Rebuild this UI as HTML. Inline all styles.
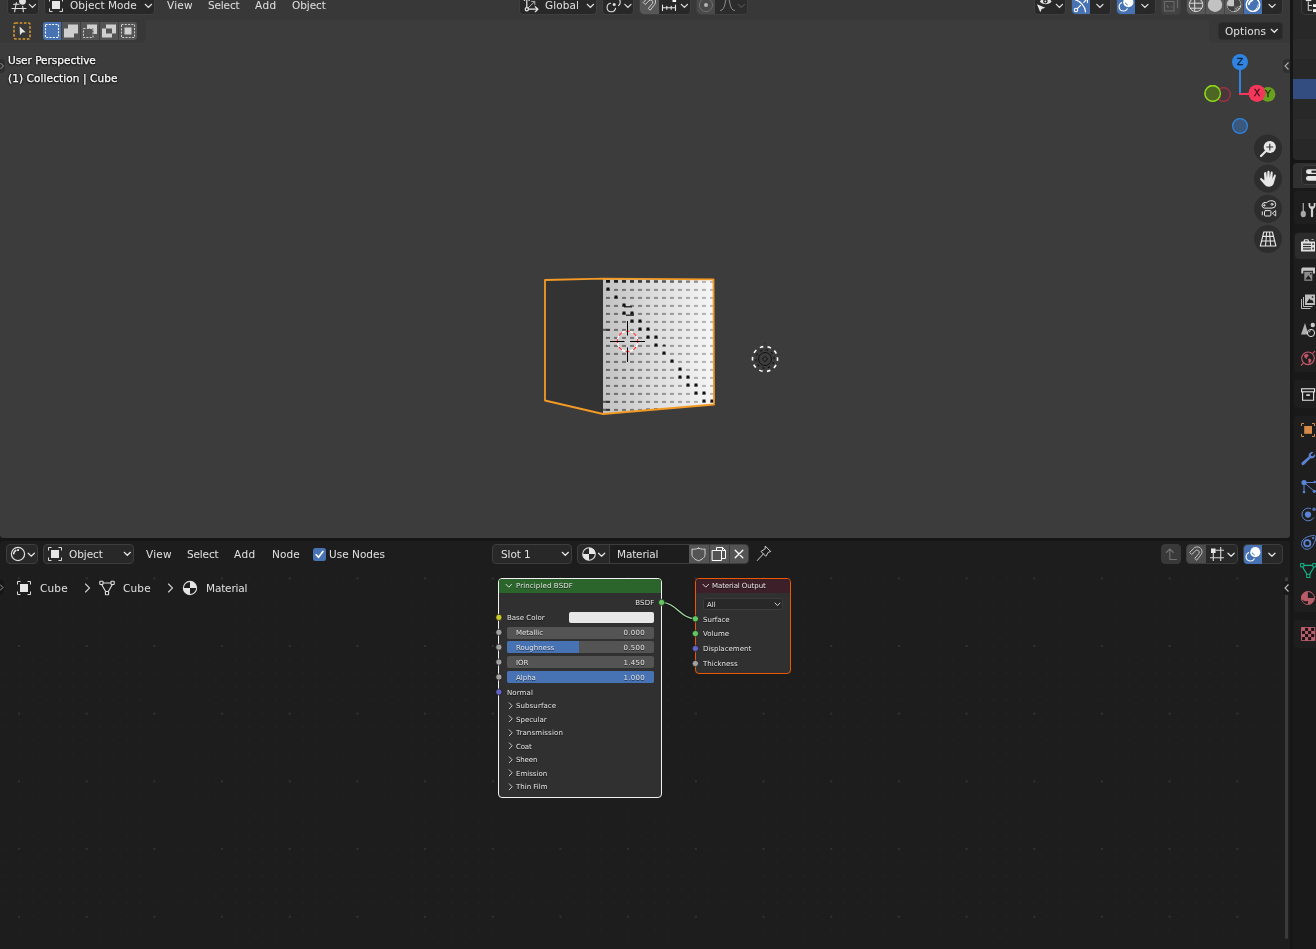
<!DOCTYPE html>
<html lang="en">
<head>
<meta charset="utf-8">
<title>Blender</title>
<style>
*{box-sizing:border-box;margin:0;padding:0}
html,body{width:1316px;height:949px;overflow:hidden;background:#161616}
body{position:relative;font-family:"DejaVu Sans","Liberation Sans",sans-serif;font-size:10.500px;color:#e0e0e0;line-height:14px}
.abs{position:absolute}
.t{position:absolute;white-space:nowrap;line-height:14px;height:14px;will-change:transform}
svg{position:absolute;overflow:visible}
/* regions */
#vp{left:0;top:0;width:1290px;height:538px;background:#3c3c3c;border-radius:0 0 3.500px 3.500px;overflow:hidden}
#ne{left:0;top:541px;width:1290px;height:408px;background:#1d1d1d;border-radius:3.500px 3.500px 0 0;overflow:hidden}
#ol{left:1293px;top:0;width:23px;height:160px;background:#282828;border-radius:0 0 0 4px;overflow:hidden}
#pr{left:1293px;top:163px;width:23px;height:786px;background:#191919;border-radius:4px 0 0 0;overflow:hidden}
/* buttons */
.btn{position:absolute;background:#282828;border:1px solid #3a3a3a;border-radius:4px}
.hb{position:absolute;top:-6px;height:20px;background:#282828;border-radius:3.500px;box-shadow:0 0 0 1px #3f3f3f}
.nb{position:absolute;top:3px;height:20px;background:#282828;border:1px solid #3d3d3d;border-radius:4px}
.ov{color:#ffffff;-webkit-text-stroke:0.250px #fff;text-shadow:0 0 2px #000,0 1px 2px rgba(0,0,0,.9),0 0 1px #000}
.n{position:absolute;white-space:nowrap;font-size:7px;line-height:10px;height:10px;color:#e6e6e6;will-change:transform;text-shadow:0 0.500px 0.500px rgba(0,0,0,.6)}
.gz{font-size:9.500px;-webkit-text-stroke:0.300px currentColor}
</style>
</head>
<body>

<!-- ================= 3D VIEWPORT ================= -->
<div id="vp" class="abs">
  <!-- header strip -->
  <div class="abs" id="vph" style="left:0;top:0;width:1290px;height:19.500px;background:#383838"></div>
  <!-- tool settings strips -->
  <div class="abs" style="left:0;top:19px;width:146px;height:24px;background:#383838;border-radius:0 0 5px 0"></div>
  <div class="abs" style="left:1209px;top:19px;width:81px;height:24px;background:#383838;border-radius:0 0 0 5px"></div>

  <!-- editor type -->
  <div class="hb" style="left:8px;width:30px"></div>
  <svg style="left:8px;top:-6px" width="30" height="20" viewBox="8 -6 30 20" fill="none" stroke="#e0e0e0" stroke-width="1.1" stroke-linecap="round">
    <path d="M13.5 4.3H19 M12 8.5H26 M16.4 2.5L14.6 11.8 M22.6 6.2L23.4 11.8"/>
    <circle cx="22.5" cy="1.3" r="3.4" fill="#e0e0e0" stroke="none"/>
    <path d="M29.3 4.4L32.4 7.4L35.5 4.4" stroke-width="1.2"/>
  </svg>
  <!-- object mode -->
  <div class="hb" style="left:45px;width:109px"></div>
  <svg style="left:48px;top:-3px" width="16" height="16" viewBox="0 0 16 16" fill="none" stroke="#e0e0e0" stroke-width="1">
    <rect x="4" y="4" width="8" height="8" fill="#e6e6e6" stroke="none"/>
    <path d="M1.5 4.5V1.5H4.5 M11.5 1.5H14.5V4.5 M14.5 11.5V14.5H11.5 M4.5 14.5H1.5V11.5"/>
  </svg>
  <div class="t" style="left:70px;top:-2px;letter-spacing:0.060px">Object Mode</div>
  <svg style="left:144px;top:3px" width="9" height="6" viewBox="0 0 9 6" fill="none" stroke="#e0e0e0" stroke-width="1.2" stroke-linecap="round"><path d="M1.2 1.3L4.4 4.4L7.6 1.3"/></svg>
  <!-- menus -->
  <div class="t" style="left:167px;top:-2px;letter-spacing:0.220px">View</div>
  <div class="t" style="left:208px;top:-2px;letter-spacing:-0.150px">Select</div>
  <div class="t" style="left:255px;top:-2px;letter-spacing:0.390px">Add</div>
  <div class="t" style="left:292px;top:-2px;letter-spacing:-0.070px">Object</div>
  <!-- global orientation -->
  <div class="hb" style="left:520px;width:76px"></div>
  <svg style="left:520px;top:-6px" width="24" height="20" viewBox="520 -6 24 20" fill="none" stroke="#e6e6e6" stroke-width="1.200" stroke-linecap="round" stroke-linejoin="round">
    <path d="M526.800 -3V7.600 M528.400 9.200H537.600 M535.300 6.700L537.900 9.200L535.300 11.700 M524.400 0.400L526.800 -2.200L529.200 0.400"/>
    <path d="M528 8L534.600 1.600 M531.500 1.400H534.800V4.700" stroke="#bdbdbd" stroke-width=".9"/>
    <circle cx="526.800" cy="9.200" r="1.600" fill="#282828"/>
  </svg>
  <div class="t" style="left:545px;top:-2px;letter-spacing:0.080px">Global</div>
  <svg style="left:586px;top:3px" width="9" height="6" viewBox="0 0 9 6" fill="none" stroke="#e0e0e0" stroke-width="1.2" stroke-linecap="round"><path d="M1.2 1.3L4.4 4.4L7.6 1.3"/></svg>
  <!-- pivot -->
  <div class="hb" style="left:603px;width:30px"></div>
  <svg style="left:603px;top:-6px" width="30" height="20" viewBox="603 -6 30 20" fill="none" stroke="#e0e0e0" stroke-width="1.1" stroke-linecap="round">
    <path d="M615.6 8.2A4.3 4.3 0 1 1 610.6 3.2"/>
    <path d="M612.5 -1.5A4.6 4.6 0 1 1 618.6 5.6"/>
    <circle cx="614.2" cy="4.4" r="1.5" fill="#e0e0e0" stroke="none"/>
    <path d="M624.8 4.4L627.9 7.4L631 4.4" stroke-width="1.2"/>
  </svg>
  <!-- snap -->
  <div class="hb" style="left:640px;width:50px"></div>
  <div class="abs" style="left:640px;top:-6px;width:19px;height:20px;background:#575757;border-radius:4px 0 0 4px"></div>
  <svg style="left:640px;top:-6px" width="50" height="20" viewBox="640 -6 50 20" fill="none" stroke="#d0d0d0" stroke-width="1" stroke-linecap="round" stroke-linejoin="round">
    <path d="M643.5 2.2L646.8 -1.2A4.6 4.6 0 0 1 654.6 4.6L650.2 10.2L648.3 8.4L652.4 3.6A2.1 2.1 0 0 0 648.8 1L645.5 4.2Z"/>
    <path d="M662.5 5V10.5 M675.5 5V10.5 M666.8 6.2V9.3 M671.2 6.2V9.3 M662.5 7.8H675.5" stroke="#e6e6e6" stroke-width="1.1"/>
    <rect x="672.5" y="-1" width="3.6" height="3" fill="#ffffff" stroke="none"/>
    <path d="M681.3 4.4L684.4 7.4L687.5 4.4" stroke="#e6e6e6" stroke-width="1.2"/>
  </svg>
  <!-- proportional -->
  <div class="hb" style="left:697px;width:50px;background:#2c2c2c"></div>
  <div class="abs" style="left:697px;top:-6px;width:18px;height:20px;background:#4a4a4a;border-radius:4px 0 0 4px"></div>
  <svg style="left:697px;top:-6px" width="50" height="20" viewBox="697 -6 50 20" fill="none" stroke="#8a8a8a" stroke-width="1" stroke-linecap="round">
    <circle cx="706" cy="5" r="6.6" stroke="#6e6e6e"/>
    <circle cx="706" cy="5" r="2" fill="#b4b4b4" stroke="none"/>
    <path d="M720.5 10.5C726 10.500 724.500 -2 727.500 -2C730.500 -2 729 10.500 734.500 10.500" stroke="#8f8f8f"/>
    <path d="M738.3 4.4L741.4 7.4L744.5 4.4" stroke="#4e4e4e" stroke-width="1.2"/>
  </svg>

  <!-- tool settings: select box + modes -->
  <svg style="left:13px;top:22px" width="18" height="18" viewBox="0 0 18 18" fill="none">
    <rect x="1" y="1" width="16" height="16" rx="1.5" stroke="#d9962b" stroke-width="1.6" stroke-dasharray="2.6 1.6"/>
    <path d="M6.6 4.6L12.6 10.2L9.2 10.4L7 13.2Z" fill="#e6e6e6"/>
  </svg>
  <div class="abs" style="left:43px;top:22px;width:94px;height:18px;background:#545454;border-radius:3px"></div>
  <div class="abs" style="left:43px;top:22px;width:18px;height:18px;background:#4772b3;border-radius:3px 0 0 3px"></div>
  <div class="abs" style="left:61px;top:22px;width:1px;height:18px;background:#3f3f3f"></div>
  <div class="abs" style="left:80px;top:22px;width:1px;height:18px;background:#3f3f3f"></div>
  <div class="abs" style="left:99px;top:22px;width:1px;height:18px;background:#3f3f3f"></div>
  <div class="abs" style="left:118px;top:22px;width:1px;height:18px;background:#3f3f3f"></div>
  <svg style="left:43px;top:22px" width="94" height="18" viewBox="43 22 94 18" fill="none" stroke="#ffffff" stroke-width="1">
    <rect x="45.500" y="24.500" width="13" height="13" stroke-dasharray="2 1.3" stroke-width="1.1"/>
    <path d="M68 24.500H78V33.500H74V37.500H64V28.500H68Z" fill="#cfcfcf" stroke="none"/>
    <path d="M87 24.500H97V34H93.500V28.500H87Z" fill="#cfcfcf" stroke="none"/>
    <rect x="83.500" y="28.500" width="9.500" height="9" stroke="#cfcfcf" stroke-dasharray="2 1.3"/>
    <path d="M106 24.500H116V33.500H112V28.500H106Z M102 28.500H106V33.500H112V37.500H102Z" fill="#cfcfcf" stroke="none"/>
    <rect x="121.500" y="24.500" width="13" height="13" stroke="#cfcfcf" stroke-dasharray="2 1.3"/>
    <rect x="124.500" y="27.500" width="7" height="7" fill="#cfcfcf" stroke="none"/>
  </svg>

  <!-- cube -->
  <svg style="left:0;top:0" width="1290" height="538" viewBox="0 0 1290 538">
    <defs>
      <linearGradient id="lg" x1="603" y1="0" x2="714" y2="0" gradientUnits="userSpaceOnUse">
        <stop offset="0" stop-color="#c2c2c2"/><stop offset="0.45" stop-color="#dcdcdc"/><stop offset="1" stop-color="#f6f6f6"/>
      </linearGradient>
      <linearGradient id="dg" x1="603" y1="0" x2="714" y2="0" gradientUnits="userSpaceOnUse">
        <stop offset="0" stop-color="#000" stop-opacity="0.480"/><stop offset="1" stop-color="#000" stop-opacity="0.240"/>
      </linearGradient>
      <pattern id="dash" x="606" y="280.900" width="8" height="8" patternUnits="userSpaceOnUse">
        <rect x="0" y="0" width="4" height="2" fill="#fff"/>
      </pattern>
      <mask id="dm"><rect x="603" y="278" width="112" height="138" fill="url(#dash)"/></mask>
      <clipPath id="fc"><polygon points="603,279 713.5,279.5 714,404.5 603,414"/></clipPath>
    </defs>
    <polygon points="545,280 603,279 603,414 545,400.5" fill="#333333"/>
    <polygon points="603,279 713.5,279.5 714,404.5 603,414" fill="url(#lg)"/>
    <g clip-path="url(#fc)">
      <rect x="603" y="278" width="112" height="138" fill="url(#dg)" mask="url(#dm)"/>
      <g fill="#111"><rect x="663" y="344.500" width="2.500" height="1.800" opacity=".8"/><rect x="606.5" y="287.5" width="3" height="3"/><rect x="614.5" y="295.5" width="3" height="3"/><rect x="622.5" y="303.5" width="3" height="3"/><rect x="622.5" y="311.5" width="3" height="3"/><rect x="630.5" y="311.5" width="3" height="3"/><rect x="630.5" y="319.5" width="3" height="3"/><rect x="638.5" y="319.5" width="3" height="3"/><rect x="638.5" y="327.5" width="3" height="3"/><rect x="646.5" y="327.5" width="3" height="3"/><rect x="646.5" y="335.5" width="3" height="3"/><rect x="654.5" y="335.5" width="3" height="3"/><rect x="654.5" y="343.5" width="3" height="3"/><rect x="662.5" y="351.5" width="3" height="3"/><rect x="670.5" y="359.5" width="3" height="3"/><rect x="678.5" y="367.5" width="3" height="3"/><rect x="678.5" y="375.5" width="3" height="3"/><rect x="686.5" y="375.5" width="3" height="3"/><rect x="686.5" y="383.5" width="3" height="3"/><rect x="694.5" y="383.5" width="3" height="3"/><rect x="694.5" y="391.5" width="3" height="3"/><rect x="702.5" y="391.5" width="3" height="3"/><rect x="702.5" y="399.5" width="3" height="3"/><rect x="710.5" y="399.5" width="3" height="3"/><rect x="606.0" y="280" width="4" height="2.5" opacity="0.95"/><rect x="614.0" y="280" width="4" height="2.5" opacity="0.88"/><rect x="622.0" y="280" width="4" height="2.5" opacity="0.81"/><rect x="630.0" y="280" width="4" height="2.5" opacity="0.74"/><rect x="638.0" y="280" width="4" height="2.5" opacity="0.67"/><rect x="646.0" y="280" width="4" height="2.5" opacity="0.60"/><rect x="654.0" y="280" width="4" height="2.5" opacity="0.53"/><rect x="662.0" y="280" width="4" height="2.5" opacity="0.46"/><rect x="670.0" y="280" width="4" height="2.5" opacity="0.39"/><rect x="678.0" y="280" width="4" height="2.5" opacity="0.32"/><rect x="686.0" y="280" width="4" height="2.5" opacity="0.25"/><rect x="694.0" y="280" width="4" height="2.5" opacity="0.18"/>
        <rect x="603" y="328.800" width="7" height="2" opacity=".6"/><rect x="603" y="400.800" width="7" height="2" opacity=".6"/><rect x="603" y="408.800" width="7" height="2" opacity=".6"/>
        <rect x="624" y="306" width="8" height="1.500" opacity=".8"/><rect x="626" y="314.500" width="8" height="1.500" opacity=".8"/>
        <rect x="646" y="408.5" width="4" height="2" opacity=".6"/><rect x="654" y="408" width="4" height="2" opacity=".5"/>
      </g>
    </g>
    <polygon points="545,280 603,278.700 713.500,279.300 714,404.500 603,414 545,400.500" fill="none" stroke="#f39a26" stroke-width="1.800" stroke-linejoin="round"/>
    <!-- 3d cursor -->
    <circle cx="627.500" cy="341.300" r="10.200" fill="none" stroke="#ffffff" stroke-width="1.300"/>
    <circle cx="627.500" cy="341.300" r="10.200" fill="none" stroke="#ff3b3b" stroke-width="1.300" stroke-dasharray="4 4.010" transform="rotate(-12 627.500 341.300)"/>
    <path d="M627.500 321V335.500 M627.500 347.500V362 M610 341.500H624.500 M630 341.500H645" stroke="#000" stroke-width="1"/>
    <!-- light -->
    <g fill="none">
      <circle cx="765" cy="359" r="12.500" stroke="#ffffff" stroke-width="1.600" stroke-dasharray="3.600 4.250" transform="rotate(-8 765 359)"/>
      <circle cx="765" cy="359" r="9.200" stroke="#111" stroke-width="1" stroke-dasharray="2.500 3.280" transform="rotate(20 765 359)"/>
      <circle cx="765" cy="359" r="6.500" stroke="#111" stroke-width="1"/>
      <path d="M765 356.300L767.700 359L765 361.700L762.300 359Z" stroke="#111" stroke-width="1"/>
      <circle cx="764.800" cy="343.500" r="1.300" fill="#343434"/>
    </g>
    <!-- gizmo -->
    <circle cx="1212.700" cy="93.500" r="7.700" fill="#4d6624" stroke="#8bd61a" stroke-width="1.400"/>
    <circle cx="1223.500" cy="94.500" r="6.800" fill="#4a373b" stroke="#a83245" stroke-width="1.200"/>
    <circle cx="1212.700" cy="93.500" r="7.700" fill="#4d6624" stroke="#8bd61a" stroke-width="1.400"/>
    <circle cx="1240" cy="126" r="7.400" fill="#3a587c" stroke="#2e84e0" stroke-width="1.300"/>
    <circle cx="1268" cy="94.300" r="7.400" fill="#68a11e"/>
    <path d="M1240 62V94" stroke="#2e84e0" stroke-width="2"/>
    <path d="M1239 94H1257" stroke="#f3375a" stroke-width="2"/>
    <circle cx="1240" cy="62" r="8" fill="#2e84e0"/>
    <circle cx="1257" cy="93.300" r="8.400" fill="#f3375a"/>
    <!-- nav buttons -->
    <g fill="#2d2d2d"><circle cx="1268" cy="148.500" r="14"/><circle cx="1268" cy="178.700" r="14"/><circle cx="1268" cy="208.800" r="14"/><circle cx="1268" cy="239" r="14"/></g>
    <g fill="none" stroke="#e6e6e6" stroke-width="1.200" stroke-linecap="round" stroke-linejoin="round">
      <circle cx="1269.800" cy="147" r="6.100" fill="#e6e6e6" stroke="none"/>
      <path d="M1265.500 151.500L1261 156" stroke-width="2.200"/>
      <path d="M1266.800 147H1272.800 M1269.800 144V150" stroke="#2d2d2d" stroke-width="1.100"/>
      <!-- hand -->
      <path d="M1264.200 172.700C1264.800 171.600 1266.300 171.900 1266.400 173.100L1267 178.200L1267.400 171.600C1267.500 170.300 1269.400 170.300 1269.500 171.600L1269.800 178L1270.700 172.200C1270.900 171 1272.700 171.200 1272.700 172.500L1272.400 179L1274 175.200C1274.500 174.100 1276.100 174.700 1275.800 175.900L1273.800 183.200C1272.800 187.300 1266.800 187.800 1264.600 184.800L1260.300 179.700C1259.600 178.700 1260.900 177.600 1261.900 178.400L1264.400 180.600L1264 173.700Z" fill="#e6e6e6" stroke="none"/>
      <!-- camera --><g transform="translate(0 1)">
      <path d="M1264.300 201.600H1266.800C1268 200 1270.200 199.700 1272 199.700A3.700 3.700 0 0 1 1272 207.100H1264.300A2.800 2.800 0 0 1 1264.300 201.600Z" stroke-width="1"/>
      <circle cx="1272" cy="203.300" r="1" stroke-width=".9"/>
      <path d="M1263.300 204.300H1265.300 M1264.300 203.300V205.300" stroke-width=".8"/>
      <rect x="1264.500" y="209.600" width="6.400" height="5.400" rx="1" stroke-width="1"/>
      <path d="M1262.300 210.800V213.800" stroke-width="1"/>
      <path d="M1275.700 210V215L1272.600 212.500Z" stroke-width=".9"/>
      </g>
      <!-- grid -->
      <path d="M1263.800 232H1272.400L1275.900 246H1260.300Z M1262.600 236.400H1273.600 M1261.400 241H1274.800 M1266.700 232L1265.500 246 M1269.500 232L1270.700 246" stroke-width="1.100"/>
    </g>
  </svg>
  <div class="t gz" style="left:1235px;top:55.200px;width:10px;text-align:center;color:#0c2240">Z</div>
  <div class="t gz" style="left:1262.500px;top:87.300px;width:10px;text-align:center;color:#1d2c08">Y</div>
  <svg style="left:1248px;top:84px" width="18" height="18" viewBox="1248 84 18 18"><circle cx="1257" cy="93.300" r="8.400" fill="#f3375a"/></svg>
  <div class="t gz" style="left:1252px;top:86.300px;width:10px;text-align:center;color:#45101a">X</div>
  <!-- sidebar toggle -->
  <div class="abs" style="left:1283px;top:59px;width:7px;height:14px;background:#2f2f2f;border-radius:4px 0 0 4px"></div>
  <svg style="left:1283px;top:59px" width="7" height="14" viewBox="0 0 7 14" fill="none" stroke="#b0b0b0" stroke-width="1.100"><path d="M5.500 3.500L2 7L5.500 10.500"/></svg>
  <!-- overlay text -->
  <div class="abs" style="left:0;top:59px;width:5px;height:14px;background:#2f2f2f;border-radius:0 4px 4px 0"></div>
  <svg style="left:0;top:59px" width="6" height="14" viewBox="0 0 6 14" fill="none" stroke="#9a9a9a" stroke-width="1"><path d="M0.500 4L3.500 7L0.500 10"/></svg>
  <div class="t ov" style="left:8px;top:53px;letter-spacing:-0.020px">User Perspective</div>
  <div class="t ov" style="left:8px;top:71px;letter-spacing:0.100px">(1) Collection | Cube</div>

  <!-- right header: visibility -->
  <div class="hb" style="left:1035px;width:30px"></div>
  <svg style="left:1035px;top:-6px" width="30" height="20" viewBox="1035 -6 30 20" fill="none">
    <path d="M1039.800 1.500C1042.500 -3 1049 -3 1051.600 1.500C1049 5 1042.500 5 1039.800 1.500Z" fill="#e0e0e0"/>
    <circle cx="1045.400" cy="1.300" r="2.200" fill="#282828"/><circle cx="1045.400" cy="1.300" r="0.900" fill="#e0e0e0"/>
    <path d="M1036.900 4.300L1045.300 7.700L1041.700 9L1040.300 12.200Z" fill="#e6e6e6"/>
    <path d="M1056.300 4.400L1059.400 7.400L1062.500 4.400" stroke="#e6e6e6" stroke-width="1.2" fill="none" stroke-linecap="round"/>
  </svg>
  <!-- gizmo -->
  <div class="hb" style="left:1072px;width:38px"></div>
  <div class="abs" style="left:1072px;top:-6px;width:18px;height:20px;background:#4772b3;border-radius:4px 0 0 4px"></div>
  <svg style="left:1072px;top:-6px" width="38" height="20" viewBox="1072 -6 38 20" fill="none" stroke="#ffffff" stroke-width="1.1" stroke-linecap="round">
    <path d="M1074.500 -0.500C1080.500 1 1085 6 1085.500 11.800" stroke-width="1.200"/>
    <path d="M1077.300 8.700L1080.500 5.400 M1083.800 2.300L1087 -1 M1084 -1.300H1087.400V2.600"/>
    <circle cx="1076" cy="10" r="1.700" fill="#4772b3"/>
    <path d="M1096.8 4.4L1099.8999999999999 7.4L1103.0 4.4" stroke="#e6e6e6" stroke-width="1.2" fill="none" stroke-linecap="round"/>
  </svg>
  <!-- overlays -->
  <div class="hb" style="left:1117px;width:38px"></div>
  <div class="abs" style="left:1117px;top:-6px;width:18px;height:20px;background:#4772b3;border-radius:4px 0 0 4px"></div>
  <svg style="left:1117px;top:-6px" width="38" height="20" viewBox="1117 -6 38 20" fill="none" stroke="#ffffff" stroke-width="1.1" stroke-linecap="round">
    <circle cx="1123.400" cy="6.700" r="4.300" stroke="#fff" stroke-width="1.200"/>
    <circle cx="1128.300" cy="2.200" r="6.300" fill="#4772b3" stroke="none"/>
    <circle cx="1128.300" cy="2.200" r="5.100" fill="#ffffff" stroke="none"/>
    <path d="M1125.300 3A4.300 4.300 0 0 1 1127.300 5" stroke="#4772b3" stroke-width="1"/>
    <path d="M1141.8 4.4L1144.8999999999999 7.4L1148.0 4.4" stroke="#e6e6e6" stroke-width="1.2" fill="none" stroke-linecap="round"/>
  </svg>
  <!-- xray -->
  <div class="hb" style="left:1162px;width:18px;background:#424242;border-color:#3c3c3c"></div>
  <svg style="left:1162px;top:-6px" width="18" height="20" viewBox="1162 -6 18 20" fill="none" stroke="#6c6c6c" stroke-width="1">
    <rect x="1164.500" y="1.500" width="9.500" height="9.500"/>
    <path d="M1167.500 -1.500H1177.500V8 M1167 5V7H1169 M1171.300 7H1172.300" />
  </svg>
  <!-- shading -->
  <div class="hb" style="left:1187px;width:95px"></div>
  <div class="abs" style="left:1187px;top:-6px;width:57px;height:20px;background:#575757;border-radius:4px 0 0 4px"></div>
  <div class="abs" style="left:1244px;top:-6px;width:18px;height:20px;background:#4772b3"></div>
  <div class="abs" style="left:1205px;top:-6px;width:1px;height:20px;background:#444"></div>
  <div class="abs" style="left:1224px;top:-6px;width:1px;height:20px;background:#444"></div>
  <div class="abs" style="left:1243px;top:-6px;width:1px;height:20px;background:#444"></div>
  <svg style="left:1187px;top:-6px" width="95" height="20" viewBox="1187 -6 95 20" fill="none" stroke="#e0e0e0" stroke-width="1">
    <circle cx="1196" cy="4.700" r="6.800" stroke="#dcdcdc"/>
    <path d="M1189.500 3.200H1202.500 M1190.200 8.200H1201.800 M1194.700 -2V11.400" stroke="#dcdcdc"/>
    <circle cx="1215" cy="4.700" r="7.200" fill="#c2c2c2" stroke="none"/>
    <circle cx="1234" cy="4.700" r="6.800" stroke="#d0d0d0"/>
    <path d="M1234 -2.100A6.800 6.800 0 0 0 1227.200 4.700C1229 6.500 1231.500 6.800 1234 5.700Z" fill="#c6c6c6" stroke="none"/>
    <path d="M1234 -2.100A6.800 6.800 0 0 1 1240.800 4.700C1239 6 1236.500 6.300 1234 5.700Z" fill="#454545" stroke="none"/>
    <path d="M1227.300 5.300C1229 7 1231.500 7.200 1234 6.200V11.500A6.800 6.800 0 0 1 1227.300 5.300Z" fill="#3e3e3e" stroke="none"/>
    <path d="M1235.500 8L1237.500 10.300 M1237.300 7.200L1239.300 9.200 M1238.800 6L1240.300 7.500" stroke="#c8c8c8" stroke-width=".8"/>
    <circle cx="1253" cy="4.700" r="6.700" stroke="#ffffff" stroke-width="1.400"/>
    <path d="M1248.900 4.200A4.600 4.600 0 0 1 1252.300 0.400" stroke="#ffffff" stroke-width="1.900" stroke-linecap="round"/>
    <path d="M1258.300 6.300L1256.800 7.200 M1257.600 7.800L1256 8.800 M1256.500 9.200L1255 10 M1255 10.300L1253.800 10.900 M1258.700 4.600L1257.400 5.300" stroke="#ffffff" stroke-width="0.900"/>
    <path d="M1269 4.400L1272.100 7.400L1275.200 4.400" stroke="#e6e6e6" stroke-width="1.2" fill="none" stroke-linecap="round"/>
  </svg>
  <!-- options -->
  <div class="btn" style="left:1218px;top:22px;width:65px;height:18px;border-color:#2f2f2f"></div>
  <div class="t" style="left:1225px;top:24px;letter-spacing:0.070px">Options</div>
  <svg style="left:1270px;top:28px" width="9" height="6" viewBox="0 0 9 6" fill="none"><path d="M1.2 1.3L4.3 4.3L7.4 1.3" stroke="#e6e6e6" stroke-width="1.2" fill="none" stroke-linecap="round"/></svg>
</div>

<!-- ================= NODE EDITOR ================= -->
<div id="ne" class="abs">
  <!-- grid dots -->
  <div class="abs" id="grid1" style="left:0;top:0;width:1290px;height:408px;background-image:radial-gradient(circle,#232323 0.500px,rgba(35,35,35,0) 1px);background-size:13.540px 13.540px;background-position:12.23px 30.53px"></div>
  <div class="abs" id="grid2" style="left:0;top:0;width:1290px;height:408px;background-image:radial-gradient(circle,#303030 0.800px,rgba(48,48,48,0) 1.400px);background-size:67.700px 67.700px;background-position:-14.85px 3.45px"></div>

  <!-- link -->
  <svg style="left:0;top:0" width="1290" height="408" viewBox="0 541 1290 408" fill="none">
    <path d="M661.500 602.400C676 602.400 681 618.800 695.300 618.800" stroke="#141414" stroke-width="3.200"/>
    <path d="M661.500 602.400C676 602.400 681 618.800 695.300 618.800" stroke="#a6d9a6" stroke-width="1.300"/>
  </svg>
  <!-- Principled BSDF -->
  <div class="abs" style="left:498px;top:37px;width:164px;height:220px;background:#303030;border:1px solid #f2f2f2;border-radius:4px;overflow:hidden">
    <div class="abs" style="left:0;top:0;width:164px;height:13.500px;background:#2b652b"></div>
  </div>
  <svg style="left:505px;top:41.5px" width="8" height="6" viewBox="0 0 8 6" fill="none" stroke="#e0e0e0" stroke-width="0.900" stroke-linecap="round"><path d="M1 1.300L3.800 4.200L6.600 1.300"/></svg>
  <div class="n" style="left:516px;top:39.6px;letter-spacing:0.120px">Principled BSDF</div>
  <div class="n" style="left:600px;width:54.500px;text-align:right;top:56.5px;letter-spacing:0.200px">BSDF</div>
  <div class="n" style="left:507px;top:72.00px">Base Color</div>
  <div class="abs" style="left:569px;top:71.2px;width:85px;height:11px;background:#e7e7e7;border-radius:2px"></div>
  <div class="abs" style="left:507px;top:85.9px;width:147px;height:11.700px;background:#545454;border-radius:2px;overflow:hidden"></div><div class="n" style="left:516px;top:87.3px">Metallic</div><div class="n" style="left:604px;width:41px;text-align:right;top:87.3px;letter-spacing:0.290px">0.000</div>
  <div class="abs" style="left:507px;top:100.4px;width:147px;height:11.700px;background:#545454;border-radius:2px;overflow:hidden"><div class="abs" style="left:0;top:0;width:72px;height:11.700px;background:#4772b3"></div></div><div class="n" style="left:516px;top:102.1px">Roughness</div><div class="n" style="left:604px;width:41px;text-align:right;top:102.1px;letter-spacing:0.290px">0.500</div>
  <div class="abs" style="left:507px;top:115.3px;width:147px;height:11.700px;background:#545454;border-radius:2px;overflow:hidden"></div><div class="n" style="left:516px;top:116.9px">IOR</div><div class="n" style="left:604px;width:41px;text-align:right;top:116.9px;letter-spacing:0.290px">1.450</div>
  <div class="abs" style="left:507px;top:130.2px;width:147px;height:11.700px;background:#545454;border-radius:2px;overflow:hidden"><div class="abs" style="left:0;top:0;width:147px;height:11.700px;background:#4772b3"></div></div><div class="n" style="left:516px;top:131.7px">Alpha</div><div class="n" style="left:604px;width:41px;text-align:right;top:131.7px;letter-spacing:0.290px">1.000</div>
  
  <div class="n" style="left:507px;top:147.00px;letter-spacing:0.100px">Normal</div>
  <svg style="left:508px;top:160.5px" width="6" height="8" viewBox="0 0 6 8" fill="none" stroke="#d8d8d8" stroke-width="0.900" stroke-linecap="round"><path d="M1.200 0.800L4.200 3.800L1.200 6.800"/></svg><div class="n" style="left:516px;top:160.10px;letter-spacing:0.100px">Subsurface</div>
  <svg style="left:508px;top:174.0px" width="6" height="8" viewBox="0 0 6 8" fill="none" stroke="#d8d8d8" stroke-width="0.900" stroke-linecap="round"><path d="M1.200 0.800L4.200 3.800L1.200 6.800"/></svg><div class="n" style="left:516px;top:173.60px">Specular</div>
  <svg style="left:508px;top:187.5px" width="6" height="8" viewBox="0 0 6 8" fill="none" stroke="#d8d8d8" stroke-width="0.900" stroke-linecap="round"><path d="M1.200 0.800L4.200 3.800L1.200 6.800"/></svg><div class="n" style="left:516px;top:187.10px;letter-spacing:0.150px">Transmission</div>
  <svg style="left:508px;top:201.0px" width="6" height="8" viewBox="0 0 6 8" fill="none" stroke="#d8d8d8" stroke-width="0.900" stroke-linecap="round"><path d="M1.200 0.800L4.200 3.800L1.200 6.800"/></svg><div class="n" style="left:516px;top:200.60px;letter-spacing:-0.150px">Coat</div>
  <svg style="left:508px;top:214.5px" width="6" height="8" viewBox="0 0 6 8" fill="none" stroke="#d8d8d8" stroke-width="0.900" stroke-linecap="round"><path d="M1.200 0.800L4.200 3.800L1.200 6.800"/></svg><div class="n" style="left:516px;top:214.10px;letter-spacing:-0.150px">Sheen</div>
  <svg style="left:508px;top:228.0px" width="6" height="8" viewBox="0 0 6 8" fill="none" stroke="#d8d8d8" stroke-width="0.900" stroke-linecap="round"><path d="M1.200 0.800L4.200 3.800L1.200 6.800"/></svg><div class="n" style="left:516px;top:227.60px">Emission</div>
  <svg style="left:508px;top:241.5px" width="6" height="8" viewBox="0 0 6 8" fill="none" stroke="#d8d8d8" stroke-width="0.900" stroke-linecap="round"><path d="M1.200 0.800L4.200 3.800L1.200 6.800"/></svg><div class="n" style="left:516px;top:241.10px">Thin Film</div>
  
  <!-- Material Output -->
  <div class="abs" style="left:695px;top:37px;width:96px;height:96px;background:#303030;border:1px solid #ed5700;border-radius:4px;overflow:hidden">
    <div class="abs" style="left:0;top:0;width:96px;height:13.500px;background:#3c1f28"></div>
  </div>
  <svg style="left:701.500px;top:41.5px" width="8" height="6" viewBox="0 0 8 6" fill="none" stroke="#e0e0e0" stroke-width="0.900" stroke-linecap="round"><path d="M1 1.300L3.800 4.200L6.600 1.300"/></svg>
  <div class="n" style="left:712px;top:39.6px;letter-spacing:-0.090px">Material Output</div>
  <div class="abs" style="left:702.500px;top:56.8px;width:80.500px;height:12.600px;background:#282828;border:1px solid #3d3d3d;border-radius:2.500px"></div>
  <div class="n" style="left:707px;top:58.80px">All</div>
  <svg style="left:774px;top:60.8px" width="7" height="5" viewBox="0 0 7 5" fill="none" stroke="#e0e0e0" stroke-width="0.900" stroke-linecap="round"><path d="M1 1L3.500 3.600L6 1"/></svg>
  <div class="n" style="left:703px;top:73.90px">Surface</div>
  <div class="n" style="left:703px;top:87.9px">Volume</div>
  <div class="n" style="left:703px;top:102.7px">Displacement</div>
  <div class="n" style="left:703px;top:117.6px">Thickness</div>
  <!-- sockets -->
  <svg style="left:0;top:0" width="1290" height="408" viewBox="0 541 1290 408" stroke="#1a1a1a" stroke-width="0.700">
    <circle cx="661.600" cy="602.400" r="3.100" fill="#63c763"/>
    <circle cx="498.900" cy="617.400" r="3.100" fill="#c7c729"/>
    <circle cx="498.900" cy="632.300" r="3.100" fill="#a1a1a1"/>
    <circle cx="498.900" cy="647.200" r="3.100" fill="#a1a1a1"/>
    <circle cx="498.900" cy="662.100" r="3.100" fill="#a1a1a1"/>
    <circle cx="498.900" cy="677" r="3.100" fill="#a1a1a1"/>
    <circle cx="498.900" cy="692" r="3.100" fill="#6363c7"/>
    <circle cx="695.400" cy="618.800" r="3.100" fill="#63c763"/>
    <circle cx="695.400" cy="633.600" r="3.100" fill="#63c763"/>
    <circle cx="695.400" cy="648.500" r="3.100" fill="#6363c7"/>
    <circle cx="695.400" cy="663.500" r="3.100" fill="#a1a1a1"/>
  </svg>
  <!-- header -->
  <div class="abs" style="left:0;top:0;width:1290px;height:27px;background:#1d1d1d"></div>
  <div class="nb" style="left:6px;width:32px"></div>
  <svg style="left:6px;top:3px" width="32" height="20" viewBox="6 544 32 20" fill="none" stroke="#e0e0e0" stroke-width="1.100" stroke-linecap="round">
    <circle cx="18" cy="554" r="6.600" stroke-width="1.200"/>
    <path d="M13.700 553.700A4.600 4.600 0 0 1 15.700 550.500" stroke-width="1.700"/>
    <rect x="17.100" y="549.100" width="1.900" height="1.900" fill="#e6e6e6" stroke="none"/>
    <path d="M28.2 553.2L31.3 556.2L34.4 553.2" stroke="#e6e6e6" stroke-width="1.200" fill="none" stroke-linecap="round"/>
  </svg>
  <div class="nb" style="left:43px;width:91px"></div>
  <svg style="left:47px;top:5px" width="16" height="16" viewBox="0 0 16 16" fill="none" stroke="#e0e0e0" stroke-width="1">
    <rect x="4" y="4" width="8" height="8" fill="#e6e6e6" stroke="none"/>
    <path d="M1.500 4.500V1.500H4.500 M11.500 1.500H14.500V4.500 M14.500 11.500V14.500H11.500 M4.500 14.500H1.500V11.500"/>
  </svg>
  <div class="t" style="left:69px;top:6px;letter-spacing:-0.070px">Object</div>
  <svg style="left:123px;top:10px" width="9" height="6" viewBox="0 0 9 6" fill="none"><path d="M1.2 1.3L4.3 4.3L7.4 1.3" stroke="#e6e6e6" stroke-width="1.200" fill="none" stroke-linecap="round"/></svg>
  <div class="t" style="left:146px;top:6px;letter-spacing:0.220px">View</div>
  <div class="t" style="left:187px;top:6px;letter-spacing:-0.150px">Select</div>
  <div class="t" style="left:234px;top:6px;letter-spacing:0.390px">Add</div>
  <div class="t" style="left:271.500px;top:6px;letter-spacing:0.070px">Node</div>
  <div class="abs" style="left:312.500px;top:6.500px;width:13px;height:13px;background:#4772b3;border-radius:2.500px"></div>
  <svg style="left:312.500px;top:6.500px" width="13" height="13" viewBox="0 0 13 13" fill="none" stroke="#ffffff" stroke-width="1.700" stroke-linecap="round" stroke-linejoin="round"><path d="M3.200 6.700L5.500 9.300L9.900 3.500"/></svg>
  <div class="t" style="left:329px;top:6px;letter-spacing:0.020px">Use Nodes</div>
  <!-- slot -->
  <div class="nb" style="left:492px;width:80px"></div>
  <div class="t" style="left:500.500px;top:6px;letter-spacing:-0.090px">Slot 1</div>
  <svg style="left:561px;top:10px" width="9" height="6" viewBox="0 0 9 6" fill="none"><path d="M1.2 1.3L4.3 4.3L7.4 1.3" stroke="#e6e6e6" stroke-width="1.200" fill="none" stroke-linecap="round"/></svg>
  <!-- material datablock -->
  <div class="nb" style="left:577px;width:172px;overflow:hidden">
    <div class="abs" style="left:31px;top:-1px;width:80px;height:20px;background:#1d1d1d;border-left:1px solid #3d3d3d"></div>
    <div class="abs" style="left:111px;top:-1px;width:60px;height:20px;background:#545454"></div>
    <div class="abs" style="left:130.500px;top:-1px;width:1px;height:20px;background:#3d3d3d"></div>
    <div class="abs" style="left:150.500px;top:-1px;width:1px;height:20px;background:#3d3d3d"></div>
  </div>
  <svg style="left:577px;top:3px" width="200" height="20" viewBox="577 544 200 20" fill="none" stroke="#e0e0e0" stroke-width="1.100" stroke-linecap="round" stroke-linejoin="round">
    <circle cx="589" cy="554" r="6.300"/>
    <path d="M589 547.700A6.300 6.300 0 0 1 595.300 554H589Z M589 560.300A6.300 6.300 0 0 1 582.700 554H589Z" fill="#e6e6e6" stroke="none"/>
    <path d="M598.5 553.2L601.6 556.2L604.7 553.2" stroke="#e6e6e6" stroke-width="1.200" fill="none" stroke-linecap="round"/>
    <path d="M698.500 548.200C695.500 549.400 693.500 549.400 692 549V554.500C692 557.500 695 559.500 698.500 560.800C702 559.500 705 557.500 705 554.500V549C703.500 549.400 701.500 549.400 698.500 548.200Z" stroke="#d0d0d0" stroke-width="1"/>
    <path d="M716.500 550.500V547.500H722.500L725.500 550.500V558.500H721.500" stroke="#ffffff" stroke-width="1"/>
    <path d="M722.500 547.500V550.500H725.500" stroke="#ffffff" stroke-width="1"/>
    <rect x="712.500" y="550.500" width="9" height="10" stroke="#ffffff" stroke-width="1"/>
    <path d="M735.200 550.200L742.800 557.800 M742.800 550.200L735.200 557.800" stroke="#ffffff" stroke-width="1.300"/>
    <path d="M765.500 546.300L770.700 551.500L768.300 552.300L765.800 556.300L761 551.500L764.800 549Z M763.300 554L757.300 560.500" stroke="#d0d0d0" stroke-width="1"/>
  </svg>
  <div class="t" style="left:616.500px;top:6px;letter-spacing:-0.170px">Material</div>
  <!-- right header buttons -->
  <div class="nb" style="left:1161px;width:20px;background:#393939;border-color:#393939"></div>
  <div class="nb" style="left:1186px;width:52px"></div>
  <div class="abs" style="left:1187px;top:4px;width:19px;height:18px;background:#4c4c4c;border-radius:3px 0 0 3px"></div>
  <div class="nb" style="left:1243px;width:40px"></div>
  <div class="abs" style="left:1243.500px;top:3.500px;width:18.500px;height:19px;background:#4772b3;border-radius:3.500px 0 0 3.500px"></div>
  <svg style="left:1161px;top:3px" width="125" height="20" viewBox="1161 544 125 20" fill="none" stroke="#e0e0e0" stroke-width="1.100" stroke-linecap="round" stroke-linejoin="round">
    <path d="M1166.300 552.500L1169.800 549L1173.300 552.500 M1169.800 549V559.500H1176.500" stroke="#707070"/>
    <path d="M1190 552.200L1193.300 548.800A4.600 4.600 0 0 1 1201.100 554.600L1196.700 560.200L1194.800 558.400L1198.900 553.600A2.100 2.100 0 0 0 1195.300 551L1192 554.200Z" stroke="#c4c4c4" stroke-width="1"/>
    <rect x="1211" y="548.500" width="4.600" height="4.500" fill="#e6e6e6" stroke="none"/>
    <path d="M1220.700 547V561 M1213.300 553V561 M1210 557.800H1224 M1215.600 550.300H1224" stroke="#d8d8d8" stroke-width="1.100" stroke-linecap="butt"/>
    <path d="M1228 553.2L1231.1 556.2L1234.2 553.2" stroke="#e6e6e6" stroke-width="1.200" fill="none" stroke-linecap="round"/>
    <circle cx="1250.400" cy="556.700" r="4.300" stroke="#fff" stroke-width="1.200"/>
    <circle cx="1255.300" cy="552.200" r="6.300" fill="#4772b3" stroke="none"/>
    <circle cx="1255.300" cy="552.200" r="5.100" fill="#ffffff" stroke="none"/>
    <path d="M1252.300 553A4.300 4.300 0 0 1 1254.300 555" stroke="#4772b3" stroke-width="1"/>
    <path d="M1268.8 553.2L1271.8999999999999 556.2L1275.0 553.2" stroke="#e6e6e6" stroke-width="1.200" fill="none" stroke-linecap="round"/>
  </svg>
  <!-- breadcrumbs -->
  <div class="abs" style="left:0;top:39px;width:4px;height:15px;background:#161616;border-radius:0 4px 4px 0"></div>
  <svg style="left:0;top:39px" width="6" height="15" viewBox="0 0 6 15" fill="none" stroke="#9a9a9a" stroke-width="1"><path d="M0 4.500L3 7.500L0 10.500"/></svg>
  <svg style="left:16px;top:39px" width="16" height="16" viewBox="0 0 16 16" fill="none" stroke="#e0e0e0" stroke-width="1">
    <rect x="4" y="4" width="8" height="8" fill="#e6e6e6" stroke="none"/>
    <path d="M1.500 4.500V1.500H4.500 M11.500 1.500H14.500V4.500 M14.500 11.500V14.500H11.500 M4.500 14.500H1.500V11.500"/>
  </svg>
  <div class="t" style="left:40px;top:40px;letter-spacing:0.170px">Cube</div>
  <svg style="left:84px;top:41px" width="8" height="12" viewBox="0 0 8 12" fill="none" stroke="#d0d0d0" stroke-width="1.100" stroke-linecap="round"><path d="M1.500 2L5.500 6L1.500 10"/></svg>
  <svg style="left:99px;top:39px" width="16" height="16" viewBox="0 0 16 16" fill="none" stroke="#e0e0e0" stroke-width="1.100">
    <path d="M3.300 3H12.700 M2.500 4.200L7.200 12.500 M13.500 4.200L8.800 12.500"/>
    <rect x="0.800" y="1.300" width="3.200" height="3.200" rx=".5" fill="#1d1d1d"/><rect x="12" y="1.300" width="3.200" height="3.200" rx=".5" fill="#1d1d1d"/><rect x="6.400" y="11.500" width="3.200" height="3.200" rx=".5" fill="#1d1d1d"/>
  </svg>
  <div class="t" style="left:123px;top:40px;letter-spacing:0.170px">Cube</div>
  <svg style="left:167px;top:41px" width="8" height="12" viewBox="0 0 8 12" fill="none" stroke="#d0d0d0" stroke-width="1.100" stroke-linecap="round"><path d="M1.500 2L5.500 6L1.500 10"/></svg>
  <svg style="left:182px;top:39px" width="16" height="16" viewBox="0 0 16 16" fill="none" stroke="#e0e0e0" stroke-width="1.100">
    <circle cx="8" cy="8" r="6.600"/>
    <path d="M8 1.400A6.600 6.600 0 0 1 14.600 8H8Z M8 14.600A6.600 6.600 0 0 1 1.400 8H8Z" fill="#e6e6e6" stroke="none"/>
  </svg>
  <div class="t" style="left:206px;top:40px;letter-spacing:-0.170px">Material</div>
  <!-- sidebar toggle + scrollbar -->
  <div class="abs" style="left:1285px;top:36px;width:3px;height:362px;background:#3b3b3b;border-radius:1.500px"></div>
  <div class="abs" style="left:1283px;top:40px;width:7px;height:14px;background:#1a1a1a;border-radius:4px 0 0 4px"></div>
  <svg style="left:1283px;top:40px" width="7" height="14" viewBox="0 0 7 14" fill="none" stroke="#c0c0c0" stroke-width="1.100"><path d="M5.500 3.500L2 7L5.500 10.500"/></svg>
</div>

<!-- ================= OUTLINER ================= -->
<div id="ol" class="abs">
  <div class="abs" style="left:0;top:39px;width:23px;height:20px;background:#2b2b2b"></div>
  <div class="abs" style="left:0;top:79px;width:23px;height:20px;background:#334d80"></div>
  <div class="abs" style="left:0;top:119px;width:23px;height:20px;background:#2b2b2b"></div>
  <div class="abs" style="left:8px;top:-5px;width:30px;height:20px;background:#262626;border:1px solid #3a3a3a;border-radius:4px"></div>
  <svg style="left:8px;top:-6px" width="15" height="20" viewBox="1301 -6 15 20" fill="none" stroke="#e0e0e0" stroke-width="1.100">
    <rect x="1305.800" y="-2" width="5.500" height="3.100" fill="#e6e6e6" stroke="none"/>
    <path d="M1308.300 1.500V10.300H1312 M1308.300 5.500H1312" stroke="#d0d0d0"/>
    <rect x="1313" y="4.200" width="4" height="2.800" fill="#f0f0f0" stroke="none"/>
    <rect x="1313" y="9.100" width="4" height="3" fill="#f0f0f0" stroke="none"/>
  </svg>
</div>

<!-- ================= PROPERTIES ================= -->
<div id="pr" class="abs">
  <div class="abs" style="left:0;top:0;width:23px;height:25px;background:#303030"></div>
  <div class="abs" style="left:8px;top:2px;width:30px;height:20px;background:#282828;border:1px solid #3d3d3d;border-radius:4px"></div>
  <svg style="left:8px;top:2px" width="15" height="20" viewBox="1301 165 15 20" fill="#e6e6e6">
    <rect x="1306" y="169.300" width="12" height="4.800" rx="2.400"/><rect x="1306" y="176" width="12" height="4.800" rx="2.400"/>
    <rect x="1311.500" y="170.600" width="6" height="2.200" fill="#282828"/>
  </svg>
  <div class="abs" style="left:1px;top:28px;width:30px;height:33px;background:#1e1e1e;border-radius:4px"></div><div class="abs" style="left:1px;top:69px;width:30px;height:140px;background:#1e1e1e;border-radius:4px"></div><div class="abs" style="left:1px;top:217px;width:30px;height:28px;background:#1e1e1e;border-radius:4px"></div><div class="abs" style="left:1px;top:253px;width:30px;height:196px;background:#1e1e1e;border-radius:4px"></div><div class="abs" style="left:1px;top:457px;width:30px;height:28px;background:#1e1e1e;border-radius:4px"></div>
  <div class="abs" style="left:2px;top:70px;width:30px;height:26px;background:#2c2c2c;border-radius:4px"></div>
  <svg style="left:0;top:0" width="23" height="786" viewBox="1293 163 23 786" fill="none">
    <!-- tool -->
    <g stroke="none">
      <rect x="1302.700" y="203" width="1.100" height="8" fill="#b8b8b8"/><ellipse cx="1303.300" cy="214" rx="2.600" ry="3.200" fill="#a8a8a8"/>
      <path d="M1308.600 203C1308 206.500 1309.300 208.400 1310.900 209.100V216.200A1.100 1.100 0 0 0 1313.100 216.200V209.100C1314.700 208.400 1316 206.500 1315.400 203L1313.700 203V206.200H1310.300V203Z" fill="#d0d0d0"/>
    </g>
    <!-- render --><g transform="translate(-1 0)">
    <g>
      <path d="M1302 241.500H1304.300L1305.300 239.300H1309.300L1310.300 241.500H1316V251.500H1302Z" fill="#e0e0e0"/>
      <rect x="1304" y="243.600" width="8" height="1.200" fill="#2c2c2c"/><rect x="1304" y="246" width="8" height="1.200" fill="#2c2c2c"/><rect x="1304" y="248.400" width="8" height="1.200" fill="#2c2c2c"/>
      <rect x="1313.300" y="243.300" width="1.500" height="1.800" fill="#2c2c2c"/><rect x="1313.300" y="247.600" width="1.500" height="1.800" fill="#2c2c2c"/>
      <rect x="1306" y="240.300" width="2.600" height="1" fill="#2c2c2c"/><rect x="1312.500" y="239" width="2" height=".8" fill="#e0e0e0"/>
    </g>
    </g>
    <!-- output --><g transform="translate(-1 0)">
    <g>
      <path d="M1303.500 267.500H1316V273.500H1314V270.800H1304.300V273.500H1302.300V268.700Z" fill="#c8c8c8"/>
      <rect x="1305.300" y="271.800" width="8" height="9" fill="#8c8c8c"/>
      <path d="M1306.300 279.600L1309.300 275.300L1312.300 279.600Z" fill="#1d1d1d"/><rect x="1311" y="273" width="1.500" height="1.500" fill="#1d1d1d"/>
    </g>
    </g>
    <!-- view layer --><g transform="translate(-1 0)">
    <g stroke="#bdbdbd" stroke-width="1">
      <path d="M1302.500 299V308.500H1311.500 M1304.500 297V306.500H1313.500"/>
      <rect x="1306.500" y="295" width="9" height="9.500" fill="#bdbdbd"/>
      <path d="M1307.500 303L1310.500 298.500L1312 300.500L1313 299.500L1314.800 303Z" fill="#1d1d1d" stroke="none"/><rect x="1312.800" y="296.300" width="1.500" height="1.500" fill="#1d1d1d" stroke="none"/>
    </g>
    </g>
    <!-- scene -->
    <g>
      <path d="M1305 323L1308.500 334.500H1301Z" fill="#b0b0b0"/>
      <circle cx="1312.800" cy="325" r="2.200" fill="#c8c8c8"/>
      <circle cx="1311" cy="333" r="3.600" fill="#1d1d1d" stroke="#e0e0e0" stroke-width="1"/>
      <path d="M1309 332.500A2.200 2.200 0 0 1 1310.800 330.800" stroke="#e0e0e0" stroke-width=".8"/>
    </g>
    <!-- world -->
    <g stroke="#c4596a" stroke-width="1.100">
      <circle cx="1308" cy="358.300" r="6.300"/>
      <path d="M1301 365.500L1303.300 363.200 M1312.700 353.400L1315 351"/>
      <path d="M1304 355.500C1306 353.500 1308 354 1308.500 355.500C1307.500 357 1306 357.500 1306.500 359L1305 357.500Z M1308.500 359C1310 358.500 1311.500 359.500 1311 361C1310.500 362.500 1309.500 362.500 1309 363.500Z" fill="#c4596a" stroke-width=".5"/>
    </g>
    <!-- collection (box) -->
    <g stroke="#e6e6e6" stroke-width="1.100">
      <rect x="1301.600" y="388.800" width="13" height="3"/>
      <path d="M1302.600 392V400.300H1313.600V392"/>
      <rect x="1306.300" y="394.300" width="3.600" height="1.600" fill="#e6e6e6" stroke="none"/>
    </g>
    <!-- object -->
    <g stroke="#d58a4a" stroke-width="1">
      <rect x="1304.200" y="426" width="7.800" height="7.800" fill="#d58a4a" stroke="none"/>
      <path d="M1301.500 426V423.500H1304 M1312 423.500H1314.500V426 M1314.500 434V436.500H1312 M1304 436.500H1301.500V434"/>
    </g>
    <!-- modifiers wrench -->
    <path d="M1313.500 452.300C1311 451.500 1308.300 453.500 1308.800 456.500L1301.800 462.500A1.600 1.600 0 0 0 1304 464.800L1310.500 458.300C1313.500 459 1315.800 456.500 1315.200 454L1312.800 456.300L1311 455.800L1310.800 454.500Z" fill="#5b84d6"/>
    <!-- particles -->
    <g stroke="#5b84d6" stroke-width="1" fill="#5b84d6">
      <path d="M1304 482.500H1314.500 M1304 482.500V491.500 M1304 482.500L1314 491"/>
      <circle cx="1304" cy="482.500" r="2.600" stroke="none"/><circle cx="1314.800" cy="482" r="1.300" stroke="none"/><circle cx="1304" cy="492" r="1.300" stroke="none"/><circle cx="1314.300" cy="491.300" r="1.600" stroke="none"/>
    </g>
    <!-- physics -->
    <g stroke="#5b84d6" stroke-width="1">
      <path d="M1313.800 517.500A6.300 6.300 0 1 1 1311 508.800"/>
      <circle cx="1308" cy="514.600" r="3.100" fill="#5b84d6" stroke="none"/><circle cx="1314" cy="509.300" r="1.700" fill="#4f70b5" stroke="none"/>
    </g>
    <!-- constraints -->
    <g stroke="#5b84d6" stroke-width="1">
      <path d="M1301.500 543.500C1301.500 538 1310 535.500 1314 535.500C1316.500 535.500 1316 538.500 1315 541C1313.500 545 1311 549.300 1307 549.300C1303.500 549.300 1301.500 546.500 1301.500 543.500Z"/>
      <circle cx="1307.300" cy="543.300" r="3.100" stroke-width="1.800"/><circle cx="1313.200" cy="538" r=".9" fill="#5b84d6" stroke-width=".5"/>
    </g>
    <!-- data -->
    <g stroke="#14b489" stroke-width="1.200">
      <path d="M1303 565.300H1313.600 M1302.300 566.500L1307.600 575.500 M1314.300 566.500L1309 575.500"/>
      <rect x="1300.600" y="563.600" width="3.200" height="3.200" fill="#1b1b1b" stroke-width="1"/><rect x="1312.800" y="563.600" width="3.200" height="3.200" fill="#1b1b1b" stroke-width="1"/><rect x="1306.700" y="574.300" width="3.200" height="3.200" fill="#1b1b1b" stroke-width="1"/>
    </g>
    <!-- material -->
    <g>
      <circle cx="1307.900" cy="598" r="6.500" fill="#b85d68" stroke="#b85d68" stroke-width="1"/>
      <path d="M1307.900 598V591.900A6.100 6.100 0 0 1 1314 598Z" fill="#1b1b1b"/>
      <path d="M1301.900 599.300C1303.800 601.600 1306 601.700 1307.900 600.800V604.100A6.100 6.100 0 0 1 1301.900 599.300Z" fill="#1b1b1b"/>
    </g>
    <!-- texture -->
    <g>
      <rect x="1301" y="626.900" width="14.300" height="14.200" rx=".8" fill="#b85d6c"/>
      <g fill="#1a1014"><rect x="1305.05" y="627.90" width="3.050" height="3.050"/><rect x="1311.15" y="627.90" width="3.050" height="3.050"/><rect x="1302.00" y="630.95" width="3.050" height="3.050"/><rect x="1308.10" y="630.95" width="3.050" height="3.050"/><rect x="1305.05" y="634.00" width="3.050" height="3.050"/><rect x="1311.15" y="634.00" width="3.050" height="3.050"/><rect x="1302.00" y="637.05" width="3.050" height="3.050"/><rect x="1308.10" y="637.05" width="3.050" height="3.050"/></g>
    </g>
  </svg>
</div>

</body>
</html>
